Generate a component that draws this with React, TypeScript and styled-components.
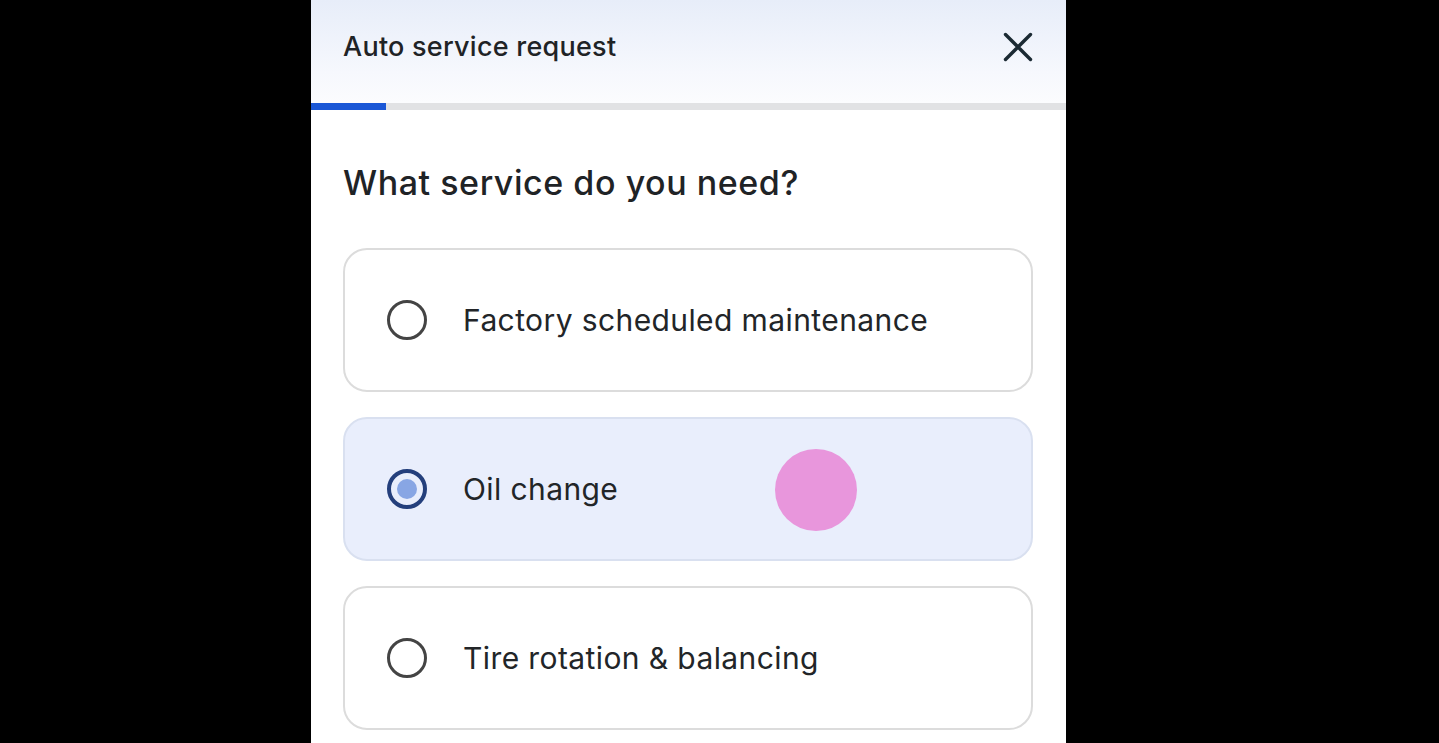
import { FC } from "react";
import styled, { createGlobalStyle } from "styled-components";

const GlobalStyle = createGlobalStyle`
  html, body {
    margin: 0;
    padding: 0;
    background: #000;
  }
  body {
    font-family: Inter, "Open Sans", "Liberation Sans", sans-serif;
  }
`;

type Option = {
  id: string;
  label: string;
};

const OPTIONS: Option[] = [
  { id: "factory", label: "Factory scheduled maintenance" },
  { id: "oil", label: "Oil change" },
  { id: "tire", label: "Tire rotation & balancing" },
];

const SELECTED = "oil";
const PROGRESS = 9.9;

const CloseIcon: FC = () => (
  <svg width="30" height="30" viewBox="0 0 30 30" fill="none">
    <path
      d="M2.5 2.5 L27.5 27.5 M27.5 2.5 L2.5 27.5"
      stroke="#1b2a33"
      strokeWidth="3.4"
      strokeLinecap="round"
    />
  </svg>
);

const ServiceCard: FC<{ option: Option; selected: boolean }> = ({
  option,
  selected,
}) => (
  <Card $selected={selected}>
    <Radio $selected={selected} />
    <Label>{option.label}</Label>
    {selected && <Touch />}
  </Card>
);

const App: FC = () => (
  <>
    <GlobalStyle />
    <Screen>
      <Panel>
        <Header>
          <Title>Auto service request</Title>
          <CloseButton aria-label="Close">
            <CloseIcon />
          </CloseButton>
        </Header>
        <Track>
          <Fill style={{ width: `${PROGRESS}%` }} />
        </Track>
        <Content>
          <Question>What service do you need?</Question>
          <List>
            {OPTIONS.map((o) => (
              <ServiceCard key={o.id} option={o} selected={o.id === SELECTED} />
            ))}
          </List>
        </Content>
      </Panel>
    </Screen>
  </>
);

const Screen = styled.div`
  width: 1439px;
  height: 743px;
  overflow: hidden;
  background: #000;
  display: flex;
  padding-left: 311px;
  box-sizing: border-box;
`;

const Panel = styled.div`
  width: 755px;
  height: 743px;
  background: #fff;
  display: flex;
  flex-direction: column;
`;

const Header = styled.header`
  height: 103px;
  box-sizing: border-box;
  padding: 0 33px 10px 32px;
  display: flex;
  align-items: center;
  justify-content: space-between;
  background: linear-gradient(180deg, #e7edf9 0%, #f6f8fd 70%, #fbfcfe 100%);
`;

const Title = styled.h1`
  margin: 0;
  font-size: 27px;
  font-weight: 500;
  color: #1f2326;
  letter-spacing: 0.25px;
`;

const CloseButton = styled.button`
  border: 0;
  background: none;
  padding: 0;
  width: 30px;
  height: 30px;
  display: flex;
  align-items: center;
  justify-content: center;
  cursor: pointer;
`;

const Track = styled.div`
  height: 7px;
  background: #e1e2e4;
  display: flex;
`;

const Fill = styled.div`
  height: 100%;
  background: #1a57d6;
`;

const Content = styled.main`
  padding: 52px 33px 0 32px;
  display: flex;
  flex-direction: column;
`;

const Question = styled.h2`
  margin: 0 0 44px;
  font-size: 34px;
  line-height: 42px;
  font-weight: 500;
  color: #1f2326;
  letter-spacing: 0.55px;
`;

const List = styled.div`
  display: flex;
  flex-direction: column;
  gap: 25px;
`;

const Card = styled.div<{ $selected: boolean }>`
  position: relative;
  height: 144px;
  box-sizing: border-box;
  border-radius: 24px;
  border: 2px solid ${(p) => (p.$selected ? "#d9e0f0" : "#dcdcdc")};
  background: ${(p) => (p.$selected ? "#e9eefc" : "#fff")};
  display: flex;
  align-items: center;
  padding-left: 42px;
  gap: 36px;
`;

const Radio = styled.span<{ $selected: boolean }>`
  width: 40px;
  height: 40px;
  box-sizing: border-box;
  border-radius: 50%;
  border: ${(p) => (p.$selected ? "4px solid #243f7c" : "3.5px solid #444")};
  display: flex;
  align-items: center;
  justify-content: center;
  flex-shrink: 0;

  &::after {
    content: "";
    width: 20px;
    height: 20px;
    border-radius: 50%;
    background: #88a6e4;
    display: ${(p) => (p.$selected ? "block" : "none")};
  }
`;

const Label = styled.span`
  font-size: 30px;
  color: #222528;
  letter-spacing: 0.4px;
`;

const Touch = styled.span`
  position: absolute;
  left: 430px;
  top: 30px;
  width: 82px;
  height: 82px;
  border-radius: 50%;
  background: #e896dc;
`;

export default App;
